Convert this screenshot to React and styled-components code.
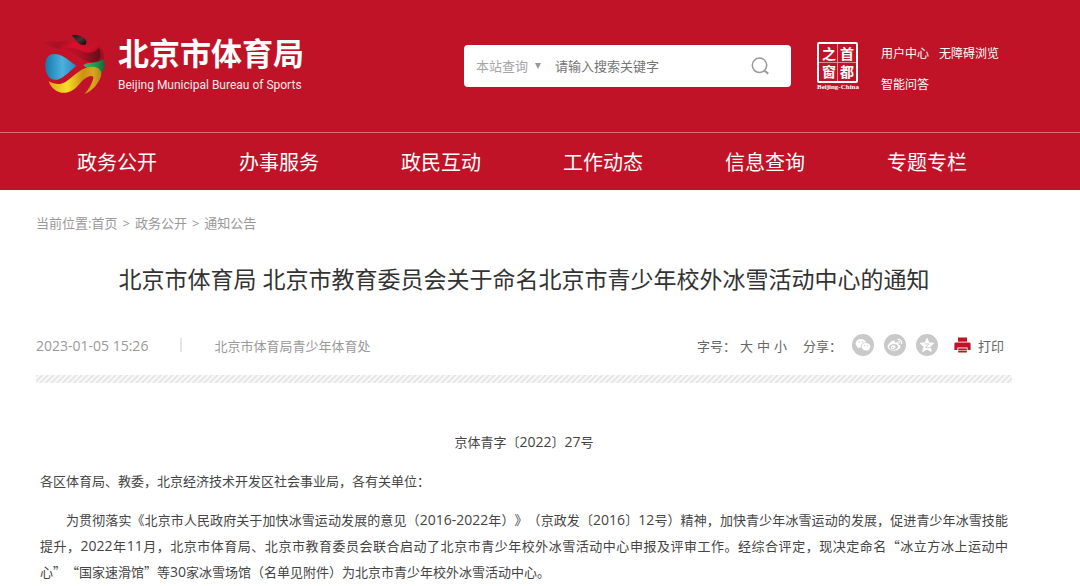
import React from 'react'
import styled, { createGlobalStyle } from 'styled-components'
import { RiWechatFill, RiWeiboFill } from 'react-icons/ri'

const navItems = ['政务公开', '办事服务', '政民互动', '工作动态', '信息查询', '专题专栏']
const crumbs = ['首页', '政务公开', '通知公告']
const sizes = ['大', '中', '小']
const notice = [
   { align: 'center', text: '京体青字〔2022〕27号' },
   { text: '各区体育局、教委，北京经济技术开发区社会事业局，各有关单位：' },
   {
      align: 'justify',
      indent: true,
      text: '为贯彻落实《北京市人民政府关于加快冰雪运动发展的意见（2016-2022年）》（京政发〔2016〕12号）精神，加快青少年冰雪运动的发展，促进青少年冰雪技能提升，2022年11月，北京市体育局、北京市教育委员会联合启动了北京市青少年校外冰雪活动中心申报及评审工作。经综合评定，现决定命名“冰立方冰上运动中心”“国家速滑馆”等30家冰雪场馆（名单见附件）为北京市青少年校外冰雪活动中心。',
   },
]

// digits are set one size up, quotation marks stay full-width
const renderText = (text) => {
   return text.split(/([\d-]+|[“”]+)/).map((el, i) => {
      if (/^[\d-]+$/.test(el)) return <Digits key={i}>{el}</Digits>
      if (/^[“”]+$/.test(el)) return <Wide key={i}>{el}</Wide>
      return el
   })
}

const LogoMark = () => (
   <svg width="66" height="63" viewBox="30 36 198 189" aria-hidden="true">
      <defs>
         <linearGradient id="logoRing" x1="0" y1="0" x2="1" y2="0.35">
            <stop offset="0" stopColor="#b81428" />
            <stop offset="0.3" stopColor="#a81024" />
            <stop offset="0.5" stopColor="#d90f2b" />
            <stop offset="0.8" stopColor="#d40f2b" />
            <stop offset="1" stopColor="#a20e22" />
         </linearGradient>
         <linearGradient id="logoShade" x1="0" y1="0" x2="1" y2="0">
            <stop offset="0" stopColor="#c80f2a" />
            <stop offset="0.5" stopColor="#b20e25" />
            <stop offset="1" stopColor="#620d18" />
         </linearGradient>
         <linearGradient id="logoBlue" x1="0" y1="0" x2="1" y2="0">
            <stop offset="0" stopColor="#1478ad" />
            <stop offset="0.55" stopColor="#4db1de" />
            <stop offset="1" stopColor="#2489bd" />
         </linearGradient>
         <linearGradient id="logoYellow" x1="0" y1="0" x2="1" y2="0">
            <stop offset="0" stopColor="#dfa516" />
            <stop offset="0.35" stopColor="#f7df25" />
            <stop offset="0.65" stopColor="#cf8f16" />
            <stop offset="0.85" stopColor="#d9a51d" />
            <stop offset="1" stopColor="#b5871c" />
         </linearGradient>
         <linearGradient id="logoGreen" x1="0" y1="0" x2="1" y2="0">
            <stop offset="0" stopColor="#48ad74" />
            <stop offset="0.6" stopColor="#1d9650" />
            <stop offset="1" stopColor="#0c6b38" />
         </linearGradient>
         <linearGradient id="logoBlack" x1="0" y1="0" x2="1" y2="1">
            <stop offset="0" stopColor="#171012" />
            <stop offset="0.5" stopColor="#4a3334" />
            <stop offset="1" stopColor="#0b0708" />
         </linearGradient>
      </defs>
      <path
         d="M36 64 C62 60 88 63 112 60 C130 57 146 70 164 77 C184 83 198 72 196 60 C214 74 224 96 222 114 C216 122 206 124 196 124 C178 128 158 116 144 106 C126 92 84 88 36 64Z"
         fill="url(#logoRing)"
      />
      <path
         d="M92 84 C116 76 134 80 155 90 C175 99 196 96 206 80 C214 96 214 112 203 121 C187 128 165 120 151 111 C132 97 112 87 92 84Z"
         fill="url(#logoShade)"
      />
      <path d="M125 43 C145 39 163 47 169 60 C172 73 158 75 146 67 C137 60 134 50 125 43Z" fill="url(#logoBlack)" />
      <path
         d="M139 134 C120 149 105 169 82 176 C57 181 44 154 46 128 C48 103 66 94 88 101 C108 108 121 122 139 134Z"
         fill="url(#logoBlue)"
      />
      <path
         d="M160 133 C174 121 200 130 219 115 C228 127 224 146 213 159 C209 145 196 139 181 142 C172 144 166 138 160 133Z"
         fill="url(#logoGreen)"
      />
      <path
         d="M56 181 C89 199 107 184 126 168 C145 151 166 136 190 137 C211 139 219 154 211 171 C201 193 185 212 163 219 C177 205 190 181 190 167 C178 160 161 174 149 188 C133 208 114 218 94 215 C75 211 63 200 56 181Z"
         fill="url(#logoYellow)"
      />
   </svg>
)

const SearchIcon = () => (
   <svg width="18" height="18" viewBox="0 0 18 18" fill="none" stroke="#999" aria-hidden="true">
      <circle cx="8.5" cy="8.3" r="7.2" strokeWidth="1.5" />
      <path d="M13.8 13.8 L17.2 16.8" strokeWidth="2" />
   </svg>
)

const QzoneIcon = () => (
   <svg width="16" height="16" viewBox="0 0 16 16" aria-hidden="true">
      <path
         d="M8 1.2 L10 5.7 L14.9 6.3 L11.2 9.6 L12.3 14.6 L8 12.1 L3.7 14.6 L4.8 9.6 L1.1 6.3 L6 5.7Z"
         fill="#fff"
         stroke="#fff"
         strokeWidth="0.8"
         strokeLinejoin="round"
      />
      <path d="M5.6 6.9 H10 L6.6 10.4 Q9 11.1 12 10.4" fill="none" stroke="#c9c9c9" strokeWidth="0.9" />
   </svg>
)

const PrinterIcon = () => (
   <svg width="17" height="16" viewBox="0 0 17 16" fill="#c01328" aria-hidden="true">
      <path d="M4 0.5 H13 V4.7 H4Z" />
      <path d="M1.8 5.6 H15.2 Q16.6 5.6 16.6 7 V13 H13.6 V10.6 H3.4 V13 H0.4 V7 Q0.4 5.6 1.8 5.6Z" />
      <path d="M4.2 11.4 H12.8 V15.5 H4.2Z" />
      <path d="M4.2 13.5 H12.8" stroke="#fff" strokeWidth="0.6" />
   </svg>
)

export default function App() {
   return (
      <>
         <GlobalStyle />
         <div lang="zh-CN">
            <header>
               <TopBar>
                  <LogoLink href="#home">
                     <LogoMark />
                     <LogoText>
                        <LogoName>北京市体育局</LogoName>
                        <LogoEnglish>Beijing Municipal Bureau of Sports</LogoEnglish>
                     </LogoText>
                  </LogoLink>
                  <Tools>
                     <SearchForm role="search" onSubmit={(e) => e.preventDefault()}>
                        <ScopeBlock>
                           <ScopeSelect aria-label="查询范围" defaultValue="site">
                              <option value="site">本站查询</option>
                           </ScopeSelect>
                           <Caret />
                        </ScopeBlock>
                        <SearchInput type="text" aria-label="搜索关键字" placeholder="请输入搜索关键字" />
                        <SearchButton type="submit" aria-label="搜索">
                           <SearchIcon />
                        </SearchButton>
                     </SearchForm>
                     <SealLink href="#capital">
                        <SealGrid>
                           {['之', '首', '窗', '都'].map((el) => (
                              <SealCell key={el}>{el}</SealCell>
                           ))}
                        </SealGrid>
                        <SealCaption>Beijing-China</SealCaption>
                     </SealLink>
                     <UserLinks>
                        <a href="#user">用户中心</a>
                        <a href="#accessible">无障碍浏览</a>
                        <a href="#qa">智能问答</a>
                     </UserLinks>
                  </Tools>
               </TopBar>
               <Nav>
                  {navItems.map((el) => (
                     <NavLink key={el} href={`#${el}`}>
                        {el}
                     </NavLink>
                  ))}
               </Nav>
            </header>
            <Main>
               <Breadcrumb>
                  当前位置:
                  {crumbs.map((el, i) => (
                     <React.Fragment key={el}>
                        {i > 0 && <Arrow>&gt;</Arrow>}
                        <a href={`#${el}`}>{el}</a>
                     </React.Fragment>
                  ))}
               </Breadcrumb>
               <Title>北京市体育局 北京市教育委员会关于命名北京市青少年校外冰雪活动中心的通知</Title>
               <Meta>
                  <Source>
                     <Time dateTime="2023-01-05T15:26">2023-01-05 15:26</Time>
                     <Divider />
                     <span>北京市体育局青少年体育处</span>
                  </Source>
                  <Actions>
                     <span>字号：</span>
                     <SizeGroup>
                        {sizes.map((el) => (
                           <TextButton key={el} type="button">
                              {el}
                           </TextButton>
                        ))}
                     </SizeGroup>
                     <span>分享：</span>
                     <ShareGroup>
                        <ShareButton type="button" aria-label="微信">
                           <RiWechatFill size={16} />
                        </ShareButton>
                        <ShareButton type="button" aria-label="微博">
                           <RiWeiboFill size={16} />
                        </ShareButton>
                        <ShareButton type="button" aria-label="QQ空间">
                           <QzoneIcon />
                        </ShareButton>
                     </ShareGroup>
                     <TextButton type="button">
                        <PrinterIcon />
                        打印
                     </TextButton>
                  </Actions>
               </Meta>
               <Stripe />
               <Article>
                  {notice.map((el) => (
                     <Paragraph key={el.text} $align={el.align} $indent={el.indent}>
                        {renderText(el.text)}
                     </Paragraph>
                  ))}
               </Article>
            </Main>
         </div>
      </>
   )
}

const GlobalStyle = createGlobalStyle`
   * {
      box-sizing: border-box;
   }
   body {
      margin: 0;
      background: #fff;
      font-family: 'Open Sans', 'Noto Sans CJK SC', sans-serif;
      font-size: 13px;
      text-spacing-trim: space-all;
   }
   a {
      color: inherit;
      text-decoration: none;
   }
   button,
   input,
   select {
      font: inherit;
      color: inherit;
   }
   svg {
      display: block;
      flex: none;
   }
`

const TopBar = styled.div`
   display: flex;
   justify-content: space-between;
   align-items: center;
   min-height: 133px;
   padding: 0 79px 0 40px;
   background: #c01328;
   border-bottom: 1px solid #d6707c;
`

const LogoLink = styled.a`
   display: flex;
   align-items: center;
   gap: 12px;
   padding-bottom: 4px;
   color: #fff;
   white-space: nowrap;
`

const LogoText = styled.div`
   display: flex;
   flex-direction: column;
   gap: 6px;
`

const LogoName = styled.span`
   font-size: 31px;
   font-weight: 700;
   line-height: 36px;
`

const LogoEnglish = styled.span`
   font-family: Roboto, sans-serif;
   font-size: 12px;
   line-height: 16px;
   opacity: 0.9;
`

const Tools = styled.div`
   display: flex;
   align-items: center;
`

const SearchForm = styled.form`
   display: flex;
   align-items: center;
   width: 327px;
   height: 42px;
   margin-right: 26px;
   padding: 0 22px 0 12px;
   background: #fff;
   border-radius: 4px;
`

const ScopeBlock = styled.div`
   display: flex;
   align-items: center;
   gap: 6px;
   color: #a5a5a5;
`

const ScopeSelect = styled.select`
   appearance: none;
   padding: 0;
   border: 0;
   background: none;
`

const Caret = styled.span`
   border: 3px solid transparent;
   border-top: 6px solid #999;
   border-bottom: 0;
`

const SearchInput = styled.input`
   flex: 1;
   min-width: 0;
   margin-left: 14px;
   padding: 0;
   border: 0;
   outline: 0;
   background: none;
   &::placeholder {
      color: #757575;
   }
`

const SearchButton = styled.button`
   padding: 0;
   border: 0;
   background: none;
`

const SealLink = styled.a`
   display: flex;
   flex-direction: column;
   align-items: center;
   margin-right: 22px;
   color: #fff;
`

const SealGrid = styled.span`
   display: grid;
   grid-template-columns: 1fr 1fr;
   gap: 1px;
   padding: 1px;
   border: 2px solid #fff;
   border-radius: 2px;
   background:
      linear-gradient(#e08994, #e08994) center / 1px 100% no-repeat,
      linear-gradient(#e08994, #e08994) center / 100% 1px no-repeat;
`

const SealCell = styled.span`
   width: 17px;
   height: 17px;
   font-size: 14px;
   font-weight: 700;
   line-height: 17px;
   text-align: center;
`

const SealCaption = styled.span`
   font-family: 'Liberation Serif', serif;
   font-size: 7px;
   font-weight: 700;
   line-height: 8px;
`

const UserLinks = styled.div`
   display: flex;
   flex: none;
   flex-wrap: wrap;
   column-gap: 10px;
   width: 120px;
   padding-top: 6px;
   color: #fff;
   font-size: 12px;
   line-height: 31px;
`

const Nav = styled.nav`
   display: flex;
   padding: 3px 72px 0 36px;
   background: #c01328;
`

const NavLink = styled.a`
   flex: 1;
   color: #fff;
   font-size: 20px;
   line-height: 54px;
   text-align: center;
`

const Main = styled.main`
   padding: 20px 68px 0 36px;
`

const Breadcrumb = styled.nav`
   color: #999;
   line-height: 26px;
`

const Arrow = styled.span`
   padding: 0 5px;
`

const Title = styled.h1`
   margin: 23px 0 24px;
   color: #333;
   font-size: 23px;
   font-weight: 400;
   line-height: 40px;
   text-align: center;
`

const Meta = styled.div`
   display: flex;
   justify-content: space-between;
   align-items: center;
   min-height: 44px;
   padding-right: 8px;
`

const Source = styled.div`
   display: flex;
   align-items: center;
   color: #999;
`

const Time = styled.time`
   font-size: 14px;
`

const Divider = styled.span`
   width: 2px;
   height: 14px;
   margin: 0 32px;
   background: #e5e5e5;
`

const Actions = styled.div`
   display: flex;
   align-items: center;
   color: #666;
`

const SizeGroup = styled.div`
   display: flex;
   gap: 4px;
   margin: 0 16px 0 4px;
`

const TextButton = styled.button`
   display: flex;
   align-items: center;
   gap: 7px;
   padding: 0;
   border: 0;
   background: none;
`

const ShareGroup = styled.div`
   display: flex;
   gap: 10px;
   margin: 0 16px 0 10px;
`

const ShareButton = styled.button`
   display: flex;
   justify-content: center;
   align-items: center;
   width: 22px;
   height: 22px;
   padding: 0;
   border: 0;
   border-radius: 50%;
   background: #c9c9c9;
   color: #fff;
`

const Stripe = styled.div`
   height: 8px;
   margin-top: 8px;
   background: repeating-linear-gradient(135deg, #e6e6e6 0 1px, #fafafa 2px 3px, #e6e6e6 4px);
`

const Article = styled.article`
   padding: 46px 4px 0;
   color: #444;
`

const Paragraph = styled.p`
   margin: 0 0 13px;
   line-height: 26px;
   text-align: ${({ $align }) => $align || 'left'};
   text-indent: ${({ $indent }) => ($indent ? '2em' : '0')};
`

const Digits = styled.span`
   font-size: 14px;
`

const Wide = styled.span`
   font-family: 'Noto Sans CJK SC', sans-serif;
   white-space: nowrap;
`
